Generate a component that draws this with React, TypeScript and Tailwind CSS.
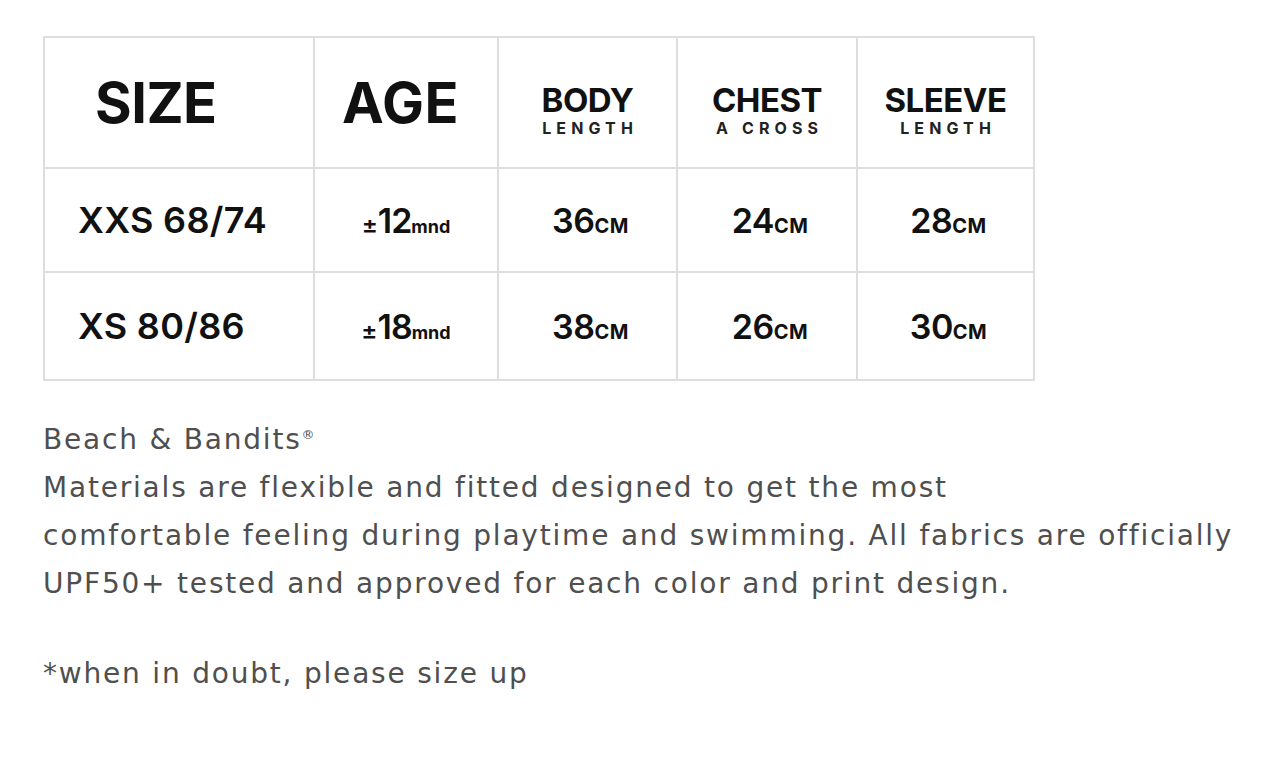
const cols = ["w-[270px]", "w-[184px]", "w-[179px]", "w-[180px]", "w-[177px]"];

const rows = [
  { size: "XXS 68/74", age: "12", body: "36", chest: "24", sleeve: "28", h: "h-[104px]" },
  { size: "XS 80/86", age: "18", body: "38", chest: "26", sleeve: "30", h: "h-[108px]" },
];

function Measure({ value, unit }: { value: string; unit: string }) {
  return (
    <span className="inline-flex items-baseline pl-[6px]">
      <span className="text-[34px] font-semibold tracking-[-0.5px]">{value}</span>
      <span className="text-[20px] font-bold tracking-[0.5px]">{unit}</span>
    </span>
  );
}

function TwoLine({ top, bottom }: { top: string; bottom: string }) {
  return (
    <div className="flex flex-col items-center leading-none pt-[14px]">
      <span className="text-[33px] font-bold tracking-[-0.5px]">{top}</span>
      <span className="text-[16px] font-bold tracking-[0.32em] mt-[3px] pl-[0.32em] text-[#222]">{bottom}</span>
    </div>
  );
}

export default function App() {
  return (
    <div
      className="min-h-screen w-full bg-white pl-[43px] pt-[36px] text-[#111]"
      style={{ fontFamily: "Inter, 'DejaVu Sans', sans-serif" }}
    >
      <table className="border-collapse border-2 border-[#dedede] table-fixed w-[990px]">
        <thead>
          <tr className="h-[131px]">
            <th className={`${cols[0]} border-2 border-[#dedede] text-left pl-[50px] text-[56px] font-bold tracking-[-0.5px]`}>SIZE</th>
            <th className={`${cols[1]} border-2 border-[#dedede] text-left pl-[27px] text-[56px] font-bold tracking-[0.5px]`}>AGE</th>
            <th className={`${cols[2]} border-2 border-[#dedede]`}>
              <TwoLine top="BODY" bottom="LENGTH" />
            </th>
            <th className={`${cols[3]} border-2 border-[#dedede]`}>
              <TwoLine top="CHEST" bottom="A CROSS" />
            </th>
            <th className={`${cols[4]} border-2 border-[#dedede]`}>
              <TwoLine top="SLEEVE" bottom="LENGTH" />
            </th>
          </tr>
        </thead>
        <tbody>
          {rows.map((r) => (
            <tr key={r.size} className={r.h}>
              <td className="border-2 border-[#dedede] pl-[33px] text-[36px] font-semibold tracking-[0.3px]">{r.size}</td>
              <td className="border-2 border-[#dedede] text-center">
                <span className="inline-flex items-baseline">
                  <span className="text-[24px] font-semibold">±</span>
                  <span className="text-[34px] font-semibold tracking-[-1px]">{r.age}</span>
                  <span className="text-[18px] font-bold">mnd</span>
                </span>
              </td>
              <td className="border-2 border-[#dedede] text-center">
                <Measure value={r.body} unit="CM" />
              </td>
              <td className="border-2 border-[#dedede] text-center">
                <Measure value={r.chest} unit="CM" />
              </td>
              <td className="border-2 border-[#dedede] text-center">
                <Measure value={r.sleeve} unit="CM" />
              </td>
            </tr>
          ))}
        </tbody>
      </table>

      <div
        className="mt-[30px] text-[28px] leading-[48px] text-[#4f4f4f] tracking-[1.8px]"
        style={{ fontFamily: "'DejaVu Sans', sans-serif" }}
      >
        <p>
          Beach &amp; Bandits<span className="text-[13px] align-super">®</span>
        </p>
        <p className="w-[1230px]">
          Materials are flexible and fitted designed to get the most
          <br />
          comfortable feeling during playtime and swimming. All fabrics are officially
          <br />
          UPF50+ tested and approved for each color and print design.
        </p>
        <p className="mt-[42px]">*when in doubt, please size up</p>
      </div>
    </div>
  );
}
